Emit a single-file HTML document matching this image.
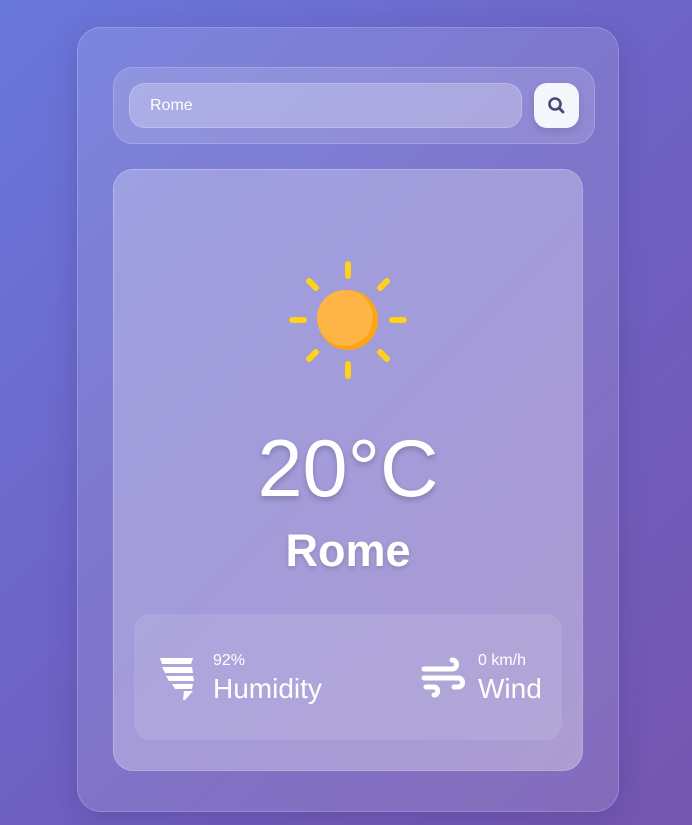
<!DOCTYPE html>
<html><head><meta charset="utf-8"><style>
*{margin:0;padding:0;box-sizing:border-box}
body{width:692px;height:825px;overflow:hidden;font-family:"Liberation Sans",sans-serif;background:linear-gradient(135deg,#6a78dc 0%,#6e62c4 50%,#7556b0 100%);position:relative}
.outer{position:absolute;left:77px;top:27px;width:542px;height:785px;border-radius:24px;background:rgba(255,255,255,0.12);border:1px solid rgba(255,255,255,0.18);box-shadow:0 8px 30px rgba(40,30,100,0.2)}
.sbar{position:absolute;left:113px;top:67px;width:482px;height:77px;border-radius:20px;background:rgba(255,255,255,0.14);border:1px solid rgba(255,255,255,0.18)}
.inp{position:absolute;left:129px;top:83px;width:393px;height:45px;border-radius:16px;background:rgba(255,255,255,0.25);border:1px solid rgba(255,255,255,0.2);color:#fff;font-size:16px;line-height:43px;padding-left:20px}
.btn{position:absolute;left:534px;top:83px;width:45px;height:45px;border-radius:13px;background:#f5f6fb;box-shadow:0 3px 8px rgba(0,0,0,0.12)}
.card{position:absolute;left:113px;top:169px;width:470px;height:602px;border-radius:20px;background:linear-gradient(135deg,rgba(255,255,255,0.25),rgba(255,255,255,0.32));border:1px solid rgba(255,255,255,0.2)}
.temp{position:absolute;left:113px;width:470px;top:423px;text-align:center;color:#fff;font-size:81px;line-height:92px;text-shadow:0 3px 6px rgba(0,0,0,0.2)}
.city{position:absolute;left:113px;width:470px;top:524px;text-align:center;color:#fff;font-size:45px;font-weight:bold;line-height:54px;text-shadow:0 2px 5px rgba(0,0,0,0.15)}
.det{position:absolute;left:134px;top:614px;width:428px;height:126px;border-radius:16px;background:rgba(255,255,255,0.1)}
.t{position:absolute;color:#fff}
</style></head><body>
<div class="outer"></div>
<div class="sbar"></div>
<div class="inp">Rome</div>
<div class="btn"><svg width="45" height="45" viewBox="0 0 45 45"><circle cx="21" cy="21" r="5.5" fill="none" stroke="#4a4577" stroke-width="2.6"/><line x1="25" y1="25" x2="29" y2="29" stroke="#4a4577" stroke-width="2.8" stroke-linecap="round"/></svg></div>
<div class="card"></div>
<svg style="position:absolute;left:283px;top:255px" width="130" height="130" viewBox="0 0 130 130">
<g stroke="#ffd11a" stroke-width="6" stroke-linecap="round">
<line x1="65" y1="9" x2="65" y2="21"/><line x1="65" y1="109" x2="65" y2="121"/>
<line x1="9" y1="65" x2="21" y2="65"/><line x1="109" y1="65" x2="121" y2="65"/>
<line x1="26" y1="26" x2="33" y2="33"/><line x1="97" y1="97" x2="104" y2="104"/>
<line x1="104" y1="26" x2="97" y2="33"/><line x1="33" y1="97" x2="26" y2="104"/>
</g>
<circle cx="65" cy="65" r="30" fill="#ffa514"/>
<circle cx="62" cy="63" r="28" fill="#ffb545"/>
</svg>
<div class="temp">20°C</div>
<div class="city">Rome</div>
<div class="det"></div>
<svg style="position:absolute;left:158px;top:656px" width="40" height="46" viewBox="0 0 40 46">
<g fill="#fff"><path d="M2 2h33l-2 6H4z"/><path d="M4 11h30l1 6H7z"/><path d="M8 20h27l1 5H11z"/><path d="M14 28h21l-1 5H17z"/><path d="M26 35h9l-8 9h-2z"/></g></svg>
<div class="t" style="left:213px;top:652px;font-size:16px">92%</div>
<div class="t" style="left:213px;top:673px;font-size:28px">Humidity</div>
<svg style="position:absolute;left:420px;top:656px" width="46" height="44" viewBox="0 0 46 44">
<g fill="none" stroke="#fff" stroke-width="5" stroke-linecap="round"><path d="M4 13h28c6 0 6-9 0-9"/><path d="M4 22h34c6 0 6 9 0 9h-4"/><path d="M6 31h8c5 0 5 8 0 8"/></g></svg>
<div class="t" style="left:478px;top:652px;font-size:16px">0 km/h</div>
<div class="t" style="left:478px;top:673px;font-size:28px">Wind</div>
</body></html>
